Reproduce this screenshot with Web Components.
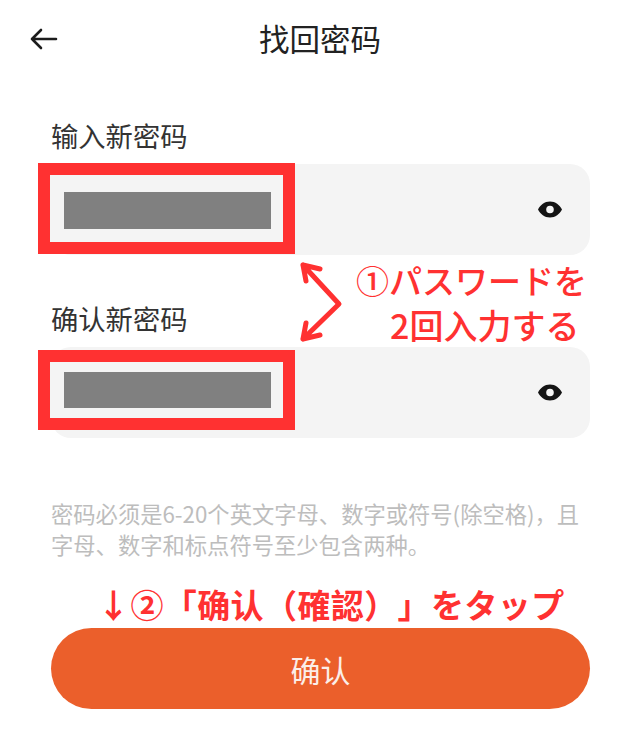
<!DOCTYPE html>
<html lang="zh"><head><meta charset="utf-8">
<style>
html,body{margin:0;background:#fff}
body{width:640px;height:740px;overflow:hidden;position:relative;font-family:"Noto Sans CJK SC","Noto Sans",sans-serif}
</style></head><body>
<reset-page></reset-page>
<script>
const def=(n,html)=>customElements.define(n,class extends HTMLElement{connectedCallback(){if(this.shadowRoot)return;this.attachShadow({mode:'open'}).innerHTML=html;}});
def('top-bar',`<style>:host{display:flex;align-items:center;justify-content:center;box-sizing:border-box;height:78px;padding-bottom:3px;position:relative;font-size:30.5px;color:#222}
svg{position:absolute;left:30px;top:27px}</style>
<svg width="28" height="24" viewBox="0 0 28 24" fill="none" stroke="#1c1c1c" stroke-width="2.6" stroke-linecap="round" stroke-linejoin="round"><path d="M26 12H2M11 3l-9 9 9 9"/></svg><slot></slot>`);
def('pw-field',`<style>:host{display:block;color:#333;font-size:27.3px}
.l{height:38px;line-height:38px;margin-bottom:10px}
.b{height:91px;border-radius:20px;background:#f4f4f4;display:flex;align-items:center;justify-content:flex-end;padding-right:28px;position:relative}
</style><div class="l"><slot></slot></div><div class="b"><slot name="mask"></slot>
<svg width="24" height="17" viewBox="0 0 24 16"><path fill="#141414" fill-rule="evenodd" d="M12 0C6.500 0 2.500 3.500 0 8c2.500 4.500 6.500 8 12 8s9.500-3.500 12-8C21.500 3.500 17.500 0 12 0zm0 4.200a3.800 3.800 0 1 1 0 7.600 3.800 3.800 0 0 1 0-7.600z"/></svg></div>`);
def('mask-box',`<style>:host{display:block;position:absolute;left:-13px;box-sizing:border-box;width:257px;border:12px solid #ff3131;background:#f4f4f4;padding:17px 12px 13px 14px}
div{height:100%;background:#808080}</style><div></div>`);
def('help-text',`<style>:host{display:block;font-size:22.3px;line-height:31px;color:#bdbdbd;white-space:nowrap}</style><slot></slot>`);
def('action-button',`<style>:host{display:flex;height:81px;border-radius:41px;background:#eb5f2b;color:#fbeee8;font-size:30px;align-items:center;justify-content:center}</style><slot></slot>`);
def('note-text',`<style>:host{display:block;position:absolute;color:#ff3131;font-weight:700;white-space:nowrap;text-spacing-trim:space-all;font-family:"Noto Sans CJK JP","Noto Sans CJK SC",sans-serif}</style><slot></slot>`);
def('double-arrow',`<style>:host{display:block;position:absolute;left:298px;top:260px}</style>
<svg width="50" height="86" viewBox="0 0 50 86" fill="none" stroke="#ff3131" stroke-width="5" stroke-linecap="round" stroke-linejoin="round"><path d="M5 5 L41 44 L5 79M5 5l17 4M5 5l3 16M5 79l17-4M5 79l3-16"/></svg>`);
def('reset-page',`<style>:host{display:block;height:740px;position:relative}
.f{padding:38px 50px 0 51px}
</style>
<top-bar>找回密码</top-bar>
<div class="f">
<pw-field>输入新密码<mask-box slot="mask" style="top:-1px;height:91px"></mask-box></pw-field>
<div style="height:44px"></div>
<pw-field>确认新密码<mask-box slot="mask" style="top:3px;height:80px;padding-top:10px;padding-bottom:10px"></mask-box></pw-field>
<div style="height:60px"></div>
<help-text>密码必须是6-20个英文字母、数字或符号(除空格)，且<br>字母、数字和标点符号至少包含两种。</help-text>
<div style="height:68px"></div>
<action-button>确认</action-button>
</div>
<double-arrow></double-arrow>
<note-text style="left:356px;top:260px;font-size:33px;line-height:40px;font-weight:500">①パスワードを</note-text>
<note-text style="left:390px;top:305px;font-size:34px;line-height:40px;font-weight:500">2回入力する</note-text>
<note-text style="left:97px;top:584px;font-size:33px;line-height:40px;letter-spacing:.4px">↓②「确认（確認）」をタップ</note-text>`);
</script>
</body></html>
